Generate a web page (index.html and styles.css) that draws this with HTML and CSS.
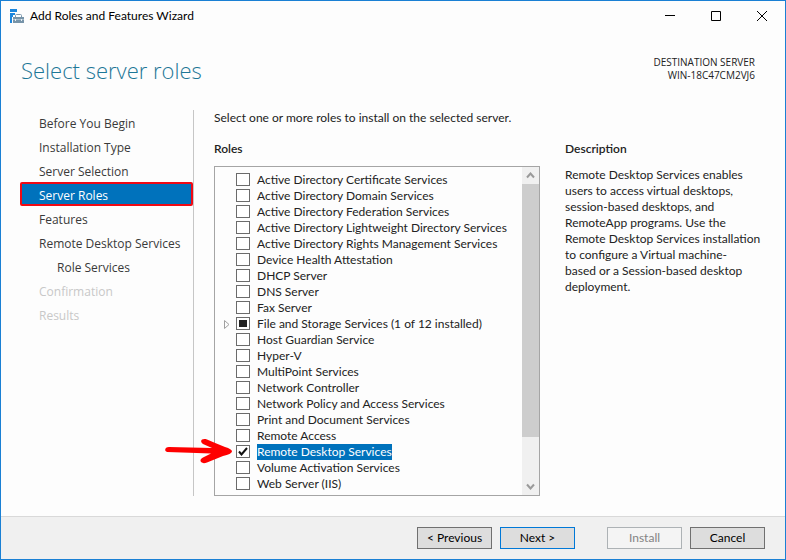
FILE: index.html
```html
<!DOCTYPE html>
<html lang="en">
<head>
<meta charset="utf-8">
<title>Add Roles and Features Wizard</title>
<link rel="stylesheet" href="styles.css">
</head>
<body>
<div class="window">
  <header class="titlebar">
    <svg class="app-icon" width="15" height="16" viewBox="0 0 15 16" aria-hidden="true">
      <path d="M0 1h7v3H0zM0 5h5v2H3v2H2v6H0z" fill="#1c86dc"/>
      <path d="M5.500 9V7.500Q5.500 6.500 6.500 6.500H10.500Q11.500 6.500 11.500 7.500V9" fill="none" stroke="#7c98ad"/>
      <path d="M3 9h11v6H3z" fill="#7794a9"/>
      <path d="M3 11.500h11" stroke="#a9bdcb"/>
      <path d="M5 11h1v2H5zM11 11h1v2h-1z" fill="#e8eff4"/>
    </svg>
    <span class="caption">Add Roles and Features Wizard</span>
    <button class="win-button" aria-label="Minimize"><svg width="12" height="12" viewBox="0 0 12 12"><path d="M1 5.500h10"/></svg></button>
    <button class="win-button" aria-label="Maximize"><svg width="12" height="12" viewBox="0 0 12 12"><path d="M1.500 1.500h9v9h-9z"/></svg></button>
    <button class="win-button" aria-label="Close"><svg width="12" height="12" viewBox="0 0 12 12"><path d="M1 1l10 10M11 1L1 11"/></svg></button>
  </header>

  <div class="heading">
    <h1>Select server roles</h1>
    <p class="server">DESTINATION SERVER<br>WIN-18C47CM2VJ6</p>
  </div>

  <main class="content">
    <nav class="steps">
      <a href="#">Before You Begin</a>
      <a href="#">Installation Type</a>
      <a href="#">Server Selection</a>
      <a href="#" class="current" aria-current="step">Server Roles</a>
      <a href="#">Features</a>
      <a href="#">Remote Desktop Services</a>
      <a href="#" class="sub">Role Services</a>
      <a class="pending">Confirmation</a>
      <a class="pending">Results</a>
    </nav>

    <section class="roles">
      <p class="intro">Select one or more roles to install on the selected server.</p>
      <h2>Roles</h2>
      <div class="listbox">
        <ul>
          <li><label><input type="checkbox"><span>Active Directory Certificate Services</span></label></li>
          <li><label><input type="checkbox"><span>Active Directory Domain Services</span></label></li>
          <li><label><input type="checkbox"><span>Active Directory Federation Services</span></label></li>
          <li><label><input type="checkbox"><span>Active Directory Lightweight Directory Services</span></label></li>
          <li><label><input type="checkbox"><span>Active Directory Rights Management Services</span></label></li>
          <li><label><input type="checkbox"><span>Device Health Attestation</span></label></li>
          <li><label><input type="checkbox"><span>DHCP Server</span></label></li>
          <li><label><input type="checkbox"><span>DNS Server</span></label></li>
          <li><label><input type="checkbox"><span>Fax Server</span></label></li>
          <li><svg class="expander" width="6" height="9" viewBox="0 0 6 9"><path d="M.5 .5v8l4.500-4z"/></svg><label><input type="checkbox" class="partial"><span>File and Storage Services (1 of 12 installed)</span></label></li>
          <li><label><input type="checkbox"><span>Host Guardian Service</span></label></li>
          <li><label><input type="checkbox"><span>Hyper-V</span></label></li>
          <li><label><input type="checkbox"><span>MultiPoint Services</span></label></li>
          <li><label><input type="checkbox"><span>Network Controller</span></label></li>
          <li><label><input type="checkbox"><span>Network Policy and Access Services</span></label></li>
          <li><label><input type="checkbox"><span>Print and Document Services</span></label></li>
          <li><label><input type="checkbox"><span>Remote Access</span></label></li>
          <li class="selected">
            <svg class="pointer" width="68" height="26" viewBox="0 0 68 26" aria-hidden="true">
              <path d="M.5 13C-.5 11 1 9 4 9L47 10 38 6C34 3 37 0 42 1.500Q50 5 60 9Q67 11 67 13.500Q66.500 16 58 18L42 24.500C36 27 33 22 38 19.500L46 15.500Q25 14.500 2 14z" fill="#fe0000"/>
            </svg>
            <label><input type="checkbox" checked><svg class="tick" width="10" height="9" viewBox="0 0 10 9"><path d="M1 4.500L3.500 7.500L9 1"/></svg><span>Remote Desktop Services</span></label>
          </li>
          <li><label><input type="checkbox"><span>Volume Activation Services</span></label></li>
          <li><label><input type="checkbox"><span>Web Server (IIS)</span></label></li>
        </ul>
        <div class="scrollbar">
          <button aria-label="Scroll up"><svg width="9" height="7" viewBox="0 0 9 7"><path d="M1 5.500L4.500 1.500L8 5.500"/></svg></button>
          <div class="track"><div class="thumb"></div></div>
          <button aria-label="Scroll down"><svg width="9" height="7" viewBox="0 0 9 7"><path d="M1 1.500L4.500 5.500L8 1.500"/></svg></button>
        </div>
      </div>
    </section>

    <section class="description">
      <h2>Description</h2>
      <p>Remote Desktop Services enables users to access virtual desktops, session-based desktops, and RemoteApp programs. Use the Remote Desktop Services installation to configure a Virtual machine-<br>based or a Session-based desktop deployment.</p>
    </section>
  </main>

  <footer class="actions">
    <div class="pair">
      <button>&lt; Previous</button>
      <button class="default">Next &gt;</button>
    </div>
    <div class="pair">
      <button disabled>Install</button>
      <button>Cancel</button>
    </div>
  </footer>
</div>
</body>
</html>
```
FILE: styles.css
```css
* {
  box-sizing: border-box;
}

body {
  margin: 0;
  font: 12px/16px Lato, "Open Sans", sans-serif;
  color: #222;
}

h1, h2, p, ul {
  margin: 0;
  padding: 0;
}

button {
  font: inherit;
}

.window {
  display: flex;
  flex-direction: column;
  min-height: 100vh;
  border: 1px solid #1a80d4;
  background: #fdfdfd;
}

.titlebar {
  display: flex;
  align-items: center;
  height: 29px;
  padding-left: 9px;
  color: #000;
}

.caption {
  flex: 1;
  margin-left: 5px;
}

.win-button {
  display: grid;
  place-items: center;
  width: 46px;
  height: 28px;
  padding: 0;
  border: 0;
  background: none;
}

.win-button svg {
  fill: none;
  stroke: #000;
}

.heading {
  display: flex;
  justify-content: space-between;
  align-items: flex-start;
  height: 80px;
  padding: 24px 30px 0 20px;
}

h1 {
  font-family: "Open Sans", "Noto Sans", sans-serif;
  font-size: 22px;
  line-height: 32px;
  font-weight: 300;
  color: #1d7797;
}

.server {
  padding-top: 2px;
  font-family: "Open Sans", "Noto Sans", sans-serif;
  font-size: 10px;
  line-height: 13px;
  text-align: right;
}

.content {
  flex: 1;
  display: grid;
  grid-template-columns: 174px 1fr 200px;
  padding: 0 20px 20px 19px;
}

.steps {
  display: flex;
  flex-direction: column;
  border-right: 1px solid #c6c6c6;
  font-family: "Open Sans", "Noto Sans", sans-serif;
}

.steps a {
  height: 24px;
  padding-left: 19px;
  line-height: 28px;
  font-weight: 400;
  color: #3a3a3a;
  text-decoration: none;
  white-space: nowrap;
}

.steps .current {
  padding-left: 17px;
  border: 2px solid #f00a14;
  border-radius: 2px;
  background: #0072bc;
  line-height: 24px;
  color: #fff;
}

.steps .sub {
  padding-left: 37px;
}

.steps .pending {
  color: #c8c8c8;
}

.roles {
  padding: 0 25px 0 20px;
}

h2 {
  font-size: 12px;
  line-height: 16px;
  font-weight: 600;
}

.intro {
  margin-bottom: 15px;
}

.listbox {
  display: flex;
  margin-top: 9px;
  border: 1px solid #a5a5a5;
}

ul {
  flex: 1;
  padding: 5px 0 3px;
  list-style: none;
}

li {
  position: relative;
  height: 16px;
  padding-left: 21px;
  white-space: nowrap;
}

label {
  display: flex;
  align-items: flex-start;
  gap: 7px;
}

input {
  appearance: none;
  width: 14px;
  height: 13px;
  margin: 1px 0 0;
  border: 1px solid #6b6b6b;
  background: #fff;
}

.partial {
  background: #222;
  box-shadow: inset 0 0 0 2px #fff;
}

.expander {
  position: absolute;
  left: 9px;
  top: 4px;
  fill: none;
  stroke: #a0a0a0;
}

.tick {
  position: absolute;
  left: 23px;
  top: 3px;
  fill: none;
  stroke: #111;
  stroke-width: 2;
}

.pointer {
  position: absolute;
  left: -50px;
  top: -6px;
}

.selected span {
  background: #0072bc;
  color: #fff;
}

.scrollbar {
  display: flex;
  flex-direction: column;
  width: 17px;
  background: #f0f0f0;
}

.scrollbar button {
  display: grid;
  place-items: center;
  height: 17px;
  padding: 0;
  border: 0;
  background: none;
}

.scrollbar svg {
  fill: none;
  stroke: #9a9a9a;
  stroke-width: 2;
}

.track {
  flex: 1;
}

.thumb {
  height: 86%;
  background: #cdcdcd;
}

.description {
  padding-top: 31px;
}

.description p {
  margin-top: 10px;
}

.actions {
  display: flex;
  justify-content: flex-end;
  gap: 32px;
  height: 43px;
  padding: 10px 20px 0;
  border-top: 1px solid #d9d9d9;
  background: #f0f0f0;
}

.pair {
  display: flex;
  gap: 8px;
}

.actions button {
  width: 75px;
  height: 22px;
  padding: 0;
  border: 1px solid #707070;
  background: #ddd;
  color: #000;
}

.actions .default {
  border-color: #0078d7;
}

.actions button:disabled {
  border-color: #adb2b5;
  background: #f4f4f4;
  color: #838383;
}
```
